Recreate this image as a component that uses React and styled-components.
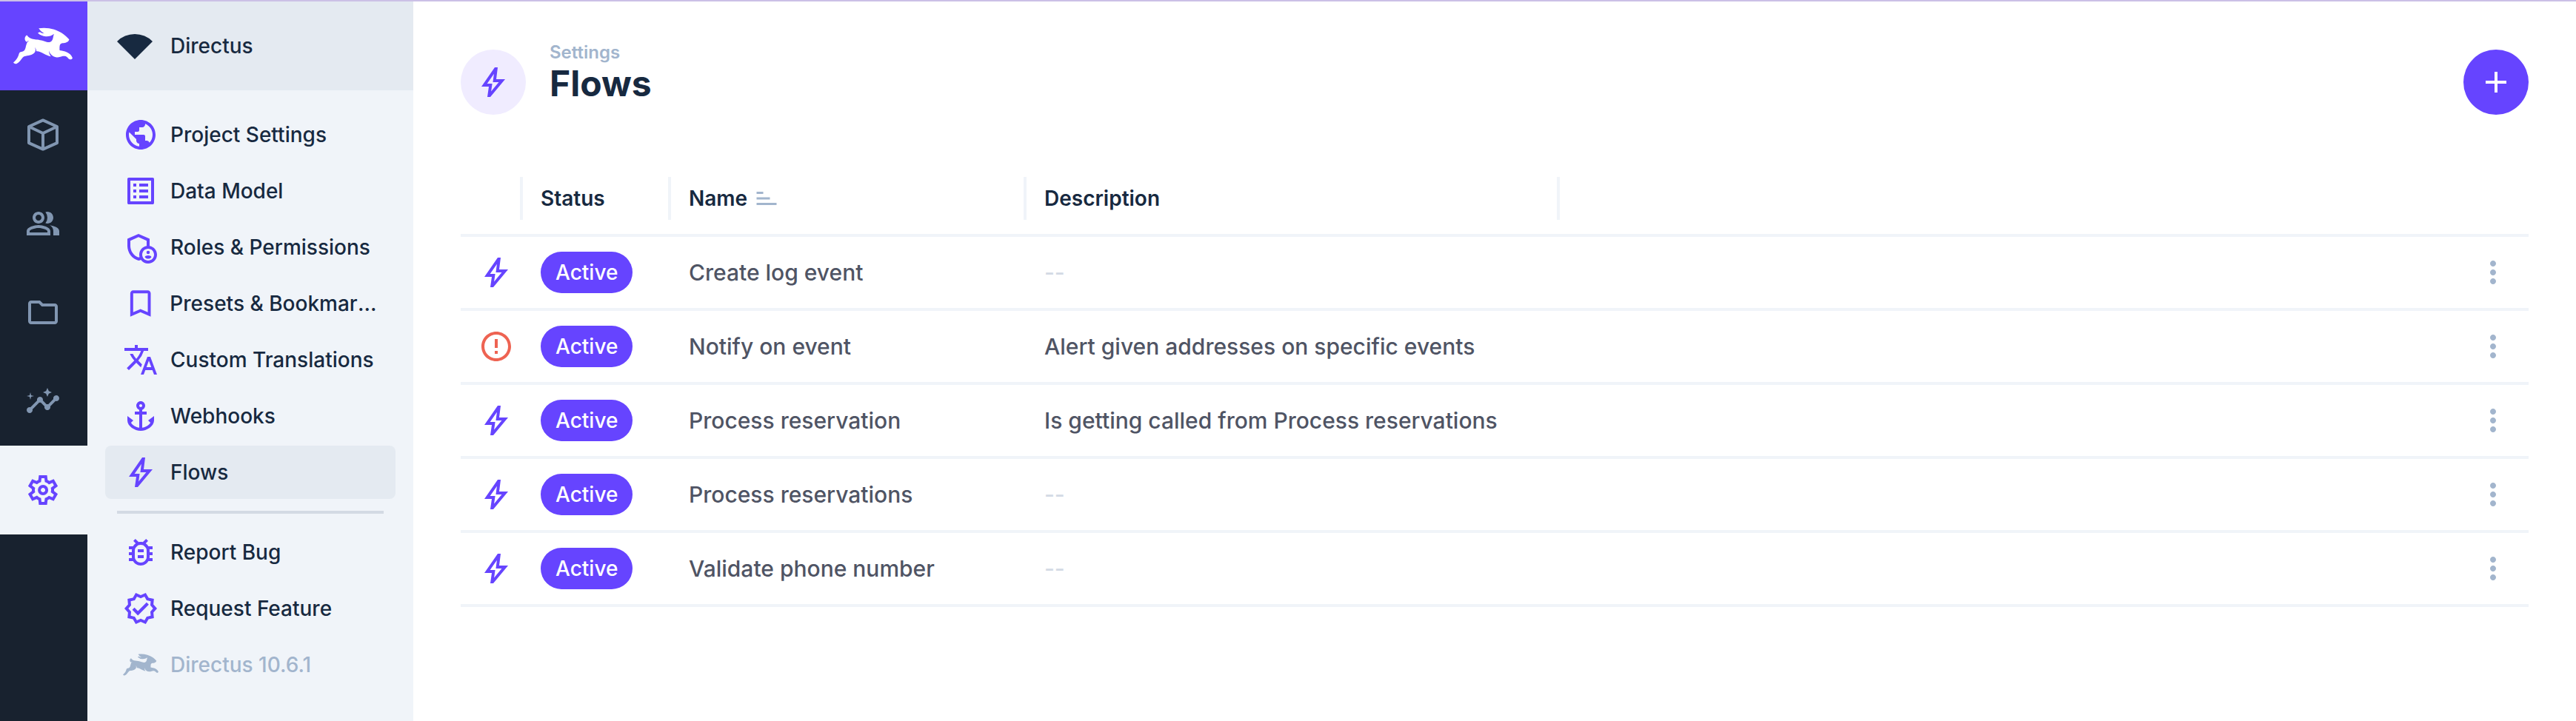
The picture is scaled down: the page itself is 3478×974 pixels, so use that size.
import React from "react";
import styled, { createGlobalStyle } from "styled-components";
import {
  MdPublic, MdOutlineListAlt, MdOutlineAdminPanelSettings, MdBookmarkBorder, MdTranslate, MdAnchor,
  MdOutlineBugReport, MdOutlineVerified, MdOutlinePeopleAlt, MdOutlineFolder, MdInsights,
  MdErrorOutline, MdMoreVert, MdAdd, MdSort,
} from "react-icons/md";
import { SiDirectus } from "react-icons/si";

const color = {
  primary: "#6644ff",
  primarySoft: "#f0ecff",
  danger: "#e35169",
  dangerIcon: "#ee6352",
  ink: "#172940",
  text: "#4f5464",
  muted: "#a2b5cd",
  faint: "#d3dae4",
  rail: "#18222f",
  railIcon: "#8196b1",
  nav: "#f0f4f9",
  navStrong: "#e4eaf1",
  line: "#f0f4f9",
};

const GlobalStyle = createGlobalStyle`
  *, *::before, *::after { box-sizing: border-box; }
  body {
    margin: 0;
    background: #ffffff;
    color: ${color.ink};
    font-family: Inter, "Liberation Sans", sans-serif;
    font-size: 28px;
    font-weight: 500;
    line-height: 36px;
    -webkit-font-smoothing: antialiased;
  }
`;

const Shell = styled.div`
  display: flex;
  min-height: 100vh;
  border-top: 2px solid #cbc0e6;
`;

const Rail = styled.nav`
  flex: none;
  display: flex;
  flex-direction: column;
  width: 118px;
  background: ${color.rail};
`;

const RailLink = styled.a`
  display: flex;
  align-items: center;
  justify-content: center;
  height: 120px;
  padding-right: 2px;
  color: ${(p) => (p.$active ? color.primary : p.$brand ? "#ffffff" : color.railIcon)};
  background: ${(p) => (p.$active ? color.nav : p.$brand ? color.primary : "transparent")};
`;

const Sidebar = styled.aside`
  flex: none;
  width: 440px;
  background: ${color.nav};
`;

const ProjectBar = styled.header`
  display: flex;
  align-items: center;
  gap: 24px;
  height: 120px;
  padding: 0 40px;
  background: ${color.navStrong};
`;

const NavList = styled.nav`
  display: flex;
  flex-direction: column;
  gap: 4px;
  padding: 24px;
`;

const NavLink = styled.a`
  display: flex;
  align-items: center;
  gap: 16px;
  height: 72px;
  padding: 0 24px;
  border-radius: 8px;
  color: ${(p) => (p.$muted ? color.muted : color.ink)};
  background: ${(p) => (p.$active ? color.navStrong : "transparent")};
  text-decoration: none;

  svg { color: ${(p) => (p.$muted ? color.muted : color.primary)}; }
`;

const NavText = styled.span`
  overflow: hidden;
  white-space: nowrap;
  text-overflow: ellipsis;
`;

const NavDivider = styled.hr`
  width: 360px;
  height: 4px;
  margin: 12px 16px;
  border: 0;
  background: ${color.faint};
`;

const Main = styled.main`
  flex: 1;
  min-width: 0;
  padding: 0 64px;
`;

const PageHeader = styled.header`
  display: flex;
  align-items: center;
  gap: 32px;
  padding: 65px 0;
`;

const PageIcon = styled.div`
  display: flex;
  align-items: center;
  justify-content: center;
  width: 88px;
  height: 88px;
  border-radius: 50%;
  color: ${color.primary};
  background: ${color.primarySoft};
`;

const TitleBlock = styled.div`
  flex: 1;
  height: 88px;
`;

const Crumb = styled.a`
  display: block;
  margin-top: -12px;
  color: ${color.muted};
  font-size: 24px;
  font-weight: 600;
  line-height: 32px;
  text-decoration: none;
`;

const Title = styled.h1`
  margin: 0;
  font-size: 48px;
  font-weight: 700;
  line-height: 52px;
`;

const AddButton = styled.button`
  display: flex;
  align-items: center;
  justify-content: center;
  width: 88px;
  height: 88px;
  padding: 0;
  border: 0;
  border-radius: 50%;
  color: #ffffff;
  background: ${color.primary};
`;

const Table = styled.table`
  width: 100%;
  table-layout: fixed;
  border-collapse: separate;
  border-spacing: 0;
`;

const Col = styled.col`
  width: ${(p) => p.$width};
`;

const HeadCell = styled.th`
  height: 100px;
  padding: 0;
  border-bottom: 4px solid ${color.line};
  font-weight: 600;
  text-align: left;
`;

const HeadContent = styled.div`
  display: flex;
  align-items: center;
  gap: 8px;
  padding-left: 24px;
  svg { color: ${color.muted}; }
`;

const Resizer = styled.span`
  width: 4px;
  height: 58px;
  margin-left: auto;
  background: ${color.line};
`;

const Cell = styled.td`
  height: 100px;
  padding: 0 24px;
  border-bottom: 4px solid ${color.line};
  color: ${(p) => (p.$empty ? color.faint : color.text)};
  font-size: 30px;
  white-space: nowrap;
`;

const IconCell = styled(Cell)`
  color: ${(p) => (p.$alert ? color.dangerIcon : color.primary)};
  svg { display: block; }
`;

const Pill = styled.span`
  display: flex;
  align-items: center;
  width: max-content;
  height: 56px;
  padding: 0 20px;
  border-radius: 28px;
  color: #ffffff;
  background: ${color.primary};
  font-size: 28px;
`;

const MenuButton = styled.button`
  display: block;
  padding: 0;
  border: 0;
  color: ${color.muted};
  background: none;
  svg { display: block; }
`;

const FlipY = styled.span`
  display: flex;
  transform: scaleY(-1);
`;

const Svg = styled.svg`
  flex: none;
  width: 48px;
  height: 48px;
  fill: currentColor;
`;

const BoltIcon = () => (
  <Svg viewBox="0 0 24 24" aria-hidden="true">
    <path fillRule="evenodd" d="m8 22 1-7H4l9-13h2l-1 8h6L10 22Zm2.55-3.8 5.175-6.2h-4l.725-5.675L7.825 13H11.3Z" />
  </Svg>
);

const FanIcon = () => (
  <Svg viewBox="0 0 24 24" aria-hidden="true">
    <path d="M12 21 0 9q2.375-2.425 5.488-3.712Q8.6 4 12 4q3.4 0 6.512 1.288Q21.625 6.575 24 9Z" />
  </Svg>
);

const BoxIcon = () => (
  <Svg viewBox="0 0 24 24" aria-hidden="true">
    <path
      fill="none"
      stroke="currentColor"
      strokeWidth="2"
      strokeLinejoin="round"
      d="M12 2.2 21.5 6.5V17.6L12 21.8 2.5 17.6V6.5ZM2.5 6.5 12 11 21.5 6.5M12 11V21.8"
    />
  </Svg>
);

const GearIcon = () => (
  <Svg viewBox="0 0 24 24" aria-hidden="true">
    <path d="m9.25 22-.4-3.2q-.325-.125-.612-.3-.288-.175-.563-.375L4.7 19.375l-2.75-4.75 2.575-1.95Q4.5 12.5 4.5 12.337v-.675q0-.162.025-.337L1.95 9.375l2.75-4.75 2.975 1.25q.275-.2.575-.375.3-.175.6-.3l.4-3.2h5.5l.4 3.2q.325.125.613.3.287.175.562.375l2.975-1.25 2.75 4.75-2.575 1.95q.025.175.025.337v.675q0 .163-.05.338l2.575 1.95-2.75 4.75-2.95-1.25q-.275.2-.575.375-.3.175-.6.3l-.4 3.2Zm2.8-6.5q1.45 0 2.475-1.025Q15.55 13.45 15.55 12q0-1.45-1.025-2.475Q13.5 8.5 12.05 8.5q-1.475 0-2.488 1.025Q8.55 10.55 8.55 12q0 1.45 1.012 2.475Q10.575 15.5 12.05 15.5Zm0-2q-.625 0-1.062-.438-.438-.437-.438-1.062t.438-1.062q.437-.438 1.062-.438t1.063.438q.437.437.437 1.062t-.437 1.062q-.438.438-1.063.438ZM12 12Zm-1 8h1.975l.35-2.65q.775-.2 1.438-.588.662-.387 1.212-.937l2.475 1.025.975-1.7-2.15-1.625q.125-.35.175-.737.05-.388.05-.788t-.05-.788q-.05-.387-.175-.737l2.15-1.625-.975-1.7-2.475 1.05q-.55-.575-1.212-.963-.663-.387-1.438-.587L13 4h-1.975l-.35 2.65q-.775.2-1.437.587-.663.388-1.213.938L5.55 7.15l-.975 1.7 2.15 1.6q-.125.375-.175.75-.05.375-.05.8 0 .4.05.775t.175.75l-2.15 1.625.975 1.7 2.475-1.05q.55.575 1.213.962.662.388 1.437.588Z" />
  </Svg>
);

const icon = (Glyph, size = 48) => <Glyph size={size} style={undefined} aria-hidden="true" />;

const modules = [
  { label: "Content", glyph: <BoxIcon /> },
  { label: "Users", glyph: icon(MdOutlinePeopleAlt) },
  { label: "Files", glyph: icon(MdOutlineFolder) },
  { label: "Insights", glyph: icon(MdInsights) },
  { label: "Settings", glyph: <GearIcon />, active: true },
];

const settingsLinks = [
  { label: "Project Settings", glyph: icon(MdPublic) },
  { label: "Data Model", glyph: icon(MdOutlineListAlt) },
  { label: "Roles & Permissions", glyph: icon(MdOutlineAdminPanelSettings) },
  { label: "Presets & Bookmarks", glyph: icon(MdBookmarkBorder) },
  { label: "Custom Translations", glyph: icon(MdTranslate) },
  { label: "Webhooks", glyph: icon(MdAnchor) },
  { label: "Flows", glyph: <BoltIcon />, active: true },
];

const helpLinks = [
  { label: "Report Bug", glyph: icon(MdOutlineBugReport) },
  { label: "Request Feature", glyph: icon(MdOutlineVerified) },
  { label: "Directus 10.6.1", glyph: icon(SiDirectus), muted: true },
];

const flows = [
  { name: "Create log event" },
  { name: "Notify on event", description: "Alert given addresses on specific events", alert: true },
  { name: "Process reservation", description: "Is getting called from Process reservations" },
  { name: "Process reservations" },
  { name: "Validate phone number" },
];

const renderLink = (item) => (
  <NavLink key={item.label} href="#" $active={item.active} $muted={item.muted}>
    {item.glyph}
    <NavText>{item.label}</NavText>
  </NavLink>
);

export default function App() {
  return (
    <>
      <GlobalStyle />
      <Shell>
        <Rail>
          <RailLink href="#" $brand aria-label="Directus">{icon(SiDirectus, 80)}</RailLink>
          {modules.map((m) => (
            <RailLink key={m.label} href="#" $active={m.active} aria-label={m.label}>{m.glyph}</RailLink>
          ))}
        </Rail>
        <Sidebar>
          <ProjectBar>
            <FanIcon />
            <span>Directus</span>
          </ProjectBar>
          <NavList>
            {settingsLinks.map(renderLink)}
            <NavDivider />
            {helpLinks.map(renderLink)}
          </NavList>
        </Sidebar>
        <Main>
          <PageHeader>
            <PageIcon><BoltIcon /></PageIcon>
            <TitleBlock>
              <Crumb href="#">Settings</Crumb>
              <Title>Flows</Title>
            </TitleBlock>
            <AddButton aria-label="Create flow">{icon(MdAdd)}</AddButton>
          </PageHeader>
          <Table>
            <colgroup>
              <Col $width="84px" />
              <Col $width="200px" />
              <Col $width="480px" />
              <Col $width="720px" />
              <Col $width="auto" />
              <Col $width="96px" />
            </colgroup>
            <thead>
              <tr>
                <HeadCell><HeadContent><Resizer /></HeadContent></HeadCell>
                <HeadCell><HeadContent>Status<Resizer /></HeadContent></HeadCell>
                <HeadCell><HeadContent>Name<FlipY>{icon(MdSort, 36)}</FlipY><Resizer /></HeadContent></HeadCell>
                <HeadCell><HeadContent>Description<Resizer /></HeadContent></HeadCell>
                <HeadCell />
                <HeadCell />
              </tr>
            </thead>
            <tbody>
              {flows.map((flow) => (
                <tr key={flow.name}>
                  <IconCell $alert={flow.alert}>{flow.alert ? icon(MdErrorOutline) : <BoltIcon />}</IconCell>
                  <Cell><Pill>Active</Pill></Cell>
                  <Cell>{flow.name}</Cell>
                  <Cell $empty={!flow.description}>{flow.description || "--"}</Cell>
                  <Cell />
                  <Cell>
                    <MenuButton aria-label={`Options for ${flow.name}`}>{icon(MdMoreVert)}</MenuButton>
                  </Cell>
                </tr>
              ))}
            </tbody>
          </Table>
        </Main>
      </Shell>
    </>
  );
}
